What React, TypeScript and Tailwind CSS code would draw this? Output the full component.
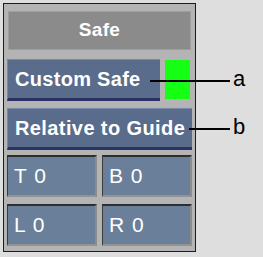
const cells = ["T 0", "B 0", "L 0", "R 0"];

export default function App() {
  return (
    <div
      className="relative w-[263px] h-[257px] bg-[#dedede] pt-[3px] pl-[3px]"
      style={{ fontFamily: '"Liberation Sans", Arial, sans-serif' }}
    >
      <div className="w-[193px] h-[249px] border border-[#1c1c1c] bg-[#b4b4b4] px-[3px] pt-[7px]">
        {/* header */}
        <div className="mx-px h-[39px] flex items-center justify-center bg-[#8b8b8b] border border-[#9e9e9e] text-white font-bold text-[19px] tracking-[0.3px]">
          Safe
        </div>

        <div className="mt-[9px] flex gap-[5px]">
          <div className="w-[153px] h-[42px] flex items-center pl-[7px] bg-[#5a6c8b] border-t border-l border-[#7888a6] border-b-[3px] border-b-[#2b3163] text-white font-bold text-[20px] tracking-[0.3px]">
            Custom Safe
          </div>
          <div className="mt-px w-[25px] h-[39px] bg-[#14ff14]" />
        </div>

        <div className="mt-[7px] w-[185px] h-[42px] flex items-center pl-[7px] bg-[#5a6c8b] border-t border-l border-[#7888a6] border-b-[3px] border-b-[#2b3163] text-white font-bold text-[20px] tracking-[0.4px]">
          Relative to Guide
        </div>

        <div className="mt-[5px] grid grid-cols-2 gap-x-[5px] gap-y-[7px]">
          {cells.map((c) => (
            <div
              key={c}
              className="h-[42px] flex items-center pl-[6px] bg-[#6a7f99] border-t-2 border-t-[#2e2e2e] border-l border-l-[#3a3a3a] border-r-2 border-r-[#8c8c8c] border-b-2 border-b-[#939393] text-white text-[21px] tracking-[1px]"
            >
              {c}
            </div>
          ))}
        </div>
      </div>

      {/* callouts */}
      <div className="absolute left-[150px] top-[80px] w-[80px] h-[2px] bg-black" />
      <div className="absolute left-[233px] top-[66px] text-[22px] leading-[26px] text-black">a</div>
      <div className="absolute left-[189px] top-[128px] w-[41px] h-[2px] bg-black" />
      <div className="absolute left-[233px] top-[114px] text-[22px] leading-[26px] text-black">b</div>
    </div>
  );
}
